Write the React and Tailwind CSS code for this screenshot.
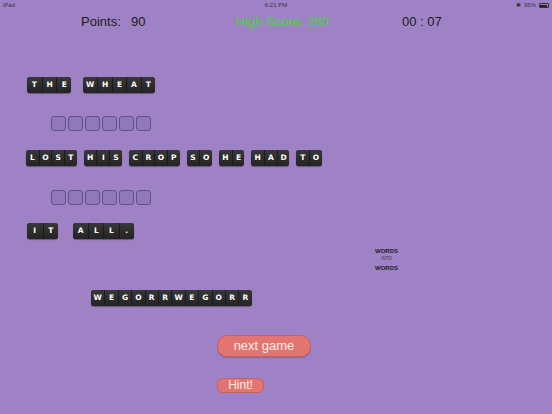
import React from 'react';

const font = { fontFamily: '"Liberation Sans", Arial, sans-serif' };
const tileFont = { fontFamily: '"DejaVu Sans", Verdana, sans-serif' };

function Word({ text, cell }) {
  return (
    <div
      className="flex rounded-[3px] bg-[#2a2a2a] shadow-[0_1px_1px_rgba(0,0,0,0.35)] overflow-hidden"
      style={tileFont}
    >
      {text.split('').map((ch, i) => (
        <div
          key={i}
          className={`${cell} h-[16px] flex items-center justify-center text-[7.5px] font-bold text-white bg-gradient-to-b from-[#383838] to-[#242424] ${i > 0 ? 'border-l border-[#1b1b1b]' : ''}`}
        >
          {ch}
        </div>
      ))}
    </div>
  );
}

function Blanks() {
  return (
    <div className="flex gap-[2px]">
      {[0, 1, 2, 3, 4, 5].map((i) => (
        <div key={i} className="w-[15px] h-[15px] rounded-[3px] bg-[#9178b8] border border-[#5f5384]" />
      ))}
    </div>
  );
}

export default function App() {
  return (
    <div className="w-[552px] h-[414px] bg-[#9f82c6] overflow-hidden text-[#1b1b1b]" style={font}>
      {/* status bar */}
      <div className="h-[11px] flex items-center justify-between px-[3px] text-[6px] text-[#3a3344]">
        <span className="w-[60px]">iPad</span>
        <span>6:21 PM</span>
        <span className="w-[60px] flex items-center justify-end gap-[3px]">
          <span className="text-[6px]">✱</span>
          <span>95%</span>
          <span className="w-[10px] h-[5px] border border-[#333] rounded-[1px] p-[0.5px] flex">
            <span className="w-full h-full bg-[#222]" />
          </span>
        </span>
      </div>

      {/* header */}
      <div className="h-[18px] mt-[2px] flex items-center text-[13px]">
        <span className="ml-[81px] w-[50px]">Points:</span>
        <span className="w-[105px]">90</span>
        <span className="w-[166px] text-[#44d63a]">High Score: 280</span>
        <span>00 : 07</span>
      </div>

      <div className="flex flex-col">
        <div className="mt-[46px] ml-[27px] flex gap-[12px]">
          <Word text="THE" cell="w-[14.7px]" />
          <Word text="WHEAT" cell="w-[14.4px]" />
        </div>

        <div className="mt-[23px] ml-[51px]">
          <Blanks />
        </div>

        <div className="mt-[19px] ml-[26px] flex gap-[7px]">
          {['LOST', 'HIS', 'CROP', 'SO', 'HE', 'HAD', 'TO'].map((w) => (
            <Word key={w} text={w} cell="w-[12.7px]" />
          ))}
        </div>

        <div className="mt-[24px] ml-[51px]">
          <Blanks />
        </div>

        <div className="mt-[18px] ml-[27px] flex gap-[15px]">
          <Word text="IT" cell="w-[15.5px]" />
          <Word text="ALL." cell="w-[15.2px]" />
        </div>

        <div className="mt-[9px] ml-[374px] w-[25px] flex flex-col items-center leading-none">
          <span className="text-[6px] font-bold text-[#1e1a26]">WORDS</span>
          <span className="text-[4.5px] mt-[3px] text-[#3b3448]">INTO</span>
          <span className="text-[6px] mt-[3px] font-bold text-[#1e1a26]">WORDS</span>
        </div>

        <div className="mt-[19px] ml-[91px] flex">
          <Word text="WEGORRWEGORR" cell="w-[13.4px]" />
        </div>

        <div className="mt-[29px] ml-[217px]">
          <div className="w-[94px] h-[22px] rounded-[10px] bg-[#e2756f] border border-[#c9625e] shadow-[0_1px_1px_rgba(0,0,0,0.2)] flex items-center justify-center text-[13px] text-[#fbecec]">
            next game
          </div>
        </div>

        <div className="mt-[21px] ml-[217px]">
          <div className="w-[47px] h-[15px] rounded-[6px] bg-[#e2756f] border border-[#c9625e] flex items-center justify-center text-[12px] text-[#fbecec]">
            Hint!
          </div>
        </div>
      </div>
    </div>
  );
}
